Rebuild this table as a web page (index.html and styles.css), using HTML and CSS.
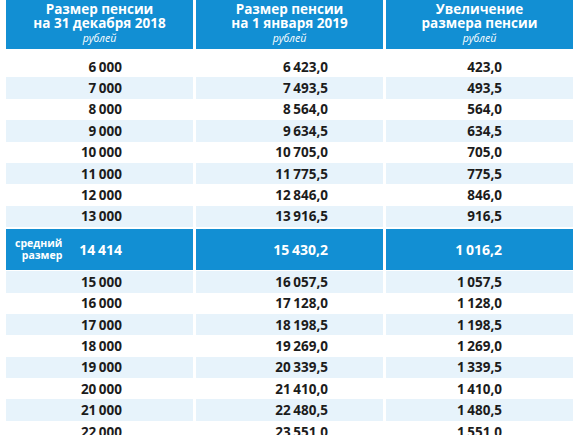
FILE: index.html
```html
<!DOCTYPE html>
<html lang="ru">
<head>
    <meta charset="UTF-8">
    <title>Размер пенсии</title>
    <link rel="stylesheet" href="styles.css">
</head>
<body>
    <div class="table">
        <div class="row head">
            <div class="cell">Размер пенсии<br>на 31 декабря 2018<span class="unit">рублей</span></div>
            <div class="cell">Размер пенсии<br>на 1 января 2019<span class="unit">рублей</span></div>
            <div class="cell">Увеличение<br>размера пенсии<span class="unit">рублей</span></div>
        </div>
        <div class="body">
            <div class="row"><div class="cell c1">6 000</div><div class="cell c2">6 423,0</div><div class="cell c3">423,0</div></div>
            <div class="row alt"><div class="cell c1">7 000</div><div class="cell c2">7 493,5</div><div class="cell c3">493,5</div></div>
            <div class="row"><div class="cell c1">8 000</div><div class="cell c2">8 564,0</div><div class="cell c3">564,0</div></div>
            <div class="row alt"><div class="cell c1">9 000</div><div class="cell c2">9 634,5</div><div class="cell c3">634,5</div></div>
            <div class="row"><div class="cell c1">10 000</div><div class="cell c2">10 705,0</div><div class="cell c3">705,0</div></div>
            <div class="row alt"><div class="cell c1">11 000</div><div class="cell c2">11 775,5</div><div class="cell c3">775,5</div></div>
            <div class="row"><div class="cell c1">12 000</div><div class="cell c2">12 846,0</div><div class="cell c3">846,0</div></div>
            <div class="row alt"><div class="cell c1">13 000</div><div class="cell c2">13 916,5</div><div class="cell c3">916,5</div></div>
            <div class="row avg">
                <div class="cell c1"><span class="avg-label">средний<br>размер</span>14 414</div>
                <div class="cell c2">15 430,2</div>
                <div class="cell c3">1 016,2</div>
            </div>
            <div class="row alt"><div class="cell c1">15 000</div><div class="cell c2">16 057,5</div><div class="cell c3">1 057,5</div></div>
            <div class="row"><div class="cell c1">16 000</div><div class="cell c2">17 128,0</div><div class="cell c3">1 128,0</div></div>
            <div class="row alt"><div class="cell c1">17 000</div><div class="cell c2">18 198,5</div><div class="cell c3">1 198,5</div></div>
            <div class="row"><div class="cell c1">18 000</div><div class="cell c2">19 269,0</div><div class="cell c3">1 269,0</div></div>
            <div class="row alt"><div class="cell c1">19 000</div><div class="cell c2">20 339,5</div><div class="cell c3">1 339,5</div></div>
            <div class="row"><div class="cell c1">20 000</div><div class="cell c2">21 410,0</div><div class="cell c3">1 410,0</div></div>
            <div class="row alt"><div class="cell c1">21 000</div><div class="cell c2">22 480,5</div><div class="cell c3">1 480,5</div></div>
            <div class="row"><div class="cell c1">22 000</div><div class="cell c2">23 551,0</div><div class="cell c3">1 551,0</div></div>
        </div>
    </div>
</body>
</html>
```

FILE: styles.css
```css
body {
    margin: 0;
    background: #fff;
    font-family: "Open Sans", "Noto Sans", Arial, sans-serif;
    color: #1c1c1c;
    overflow: hidden;
}
.table {
    padding-left: 6px;
}
.row {
    display: grid;
    grid-template-columns: 187px 187px 187px;
    column-gap: 3px;
    height: 21.4px;
}
.cell {
    display: flex;
    align-items: center;
    justify-content: flex-end;
    font-size: 13.5px;
    font-weight: 700;
    word-spacing: -1px;
}
.c1, .c3 {
    padding-right: 71px;
}
.c2 {
    padding-right: 55px;
}
.alt .cell {
    background: #e7f3fb;
}
.head {
    height: 49px;
    margin-bottom: 7px;
}
.head .cell {
    display: block;
    background: #128fd3;
    color: #fff;
    text-align: center;
    font-size: 13.5px;
    line-height: 14px;
    padding: 2px 0 0 0;
    word-spacing: 0;
    box-sizing: border-box;
}
.unit {
    display: block;
    margin-top: 2px;
    font-size: 10.5px;
    line-height: 13px;
    font-weight: 400;
    font-style: italic;
}
.body {
    display: flex;
    flex-direction: column;
}
.avg {
    height: 41px;
    margin: 2px 0 1px 0;
}
.avg .cell {
    background: #128fd3;
    color: #fff;
    font-size: 14px;
}
.avg-label {
    margin-right: auto;
    padding-left: 9px;
    font-size: 10.5px;
    line-height: 11.5px;
    text-align: right;
    word-spacing: 0;
}
```
